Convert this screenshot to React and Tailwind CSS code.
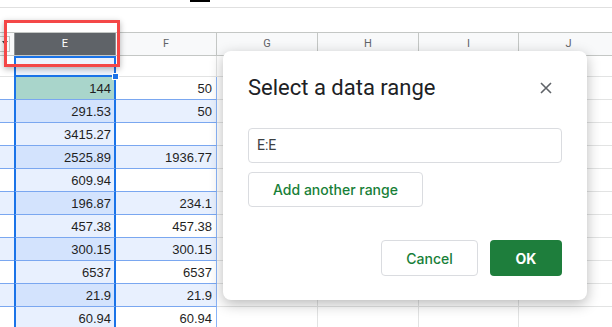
const rows = [
  ['144', '50'],
  ['291.53', '50'],
  ['3415.27', ''],
  ['2525.89', '1936.77'],
  ['609.94', ''],
  ['196.87', '234.1'],
  ['457.38', '457.38'],
  ['300.15', '300.15'],
  ['6537', '6537'],
  ['21.9', '21.9'],
  ['60.94', '60.94'],
]

const rest = ['G', 'H', 'I', 'J']
const restW = ['w-[101px]', 'w-[101px]', 'w-[100px]', 'w-[100px]']

function DataRow({ e, f, i }) {
  const banded = i % 2 === 1
  const eBg = i === 0 ? 'bg-[#a9d5cb]' : banded ? 'bg-[#d3e3fd]' : 'bg-[#e8f0fe]'
  const sideBg = banded ? 'bg-[#e8f0fe]' : 'bg-white'
  return (
    <div className="flex h-[23px] shrink-0">
      <div className={`w-[14px] shrink-0 border-b border-[#7aa7f0] ${sideBg}`} />
      <div className={`w-[102px] shrink-0 border-x-2 border-b border-x-[#1a73e8] border-b-[#7aa7f0] ${eBg} pr-[3px] pt-px text-right leading-[21px]`}>{e}</div>
      <div className={`w-[101px] shrink-0 border-r border-b border-r-[#8ab4f8] border-b-[#7aa7f0] ${sideBg} pr-[4px] pt-px text-right leading-[21px]`}>{f}</div>
      {rest.map((c, k) => (
        <div key={c} className={`${restW[k]} shrink-0 border-r border-b border-[#e2e3e3] bg-white`} />
      ))}
    </div>
  )
}

export default function App() {
  return (
    <div className="relative w-[612px] h-[327px] overflow-hidden bg-white text-[13px] text-[#1f1f1f] font-['Liberation_Sans',Arial,sans-serif]">
      <div className="h-[8px] border-b border-[#e0e0e0] relative">
        <div className="absolute left-[190px] top-0 w-[20px] h-[2px] bg-black" />
      </div>
      <div className="h-[24px]" />

      {/* column headers */}
      <div className="flex h-[24px] border-y border-[#c4c7c5] bg-[#f8f9fa] text-[11px] text-[#5f6368] font-['Roboto',sans-serif]">
        <div className="w-[14px] shrink-0 relative">
          <div className="absolute left-0 top-[3px] w-[10px] h-[16px] border border-[#c4c7c5] border-l-0" />
          <div className="absolute left-[2px] top-[8px] w-0 h-0 border-x-[3px] border-x-transparent border-t-[4px] border-t-[#444]" />
        </div>
        <div className="w-[102px] shrink-0 bg-[#5f6368] text-white flex items-center justify-center border-x border-[#8c9093]">E</div>
        <div className="w-[101px] shrink-0 border-r border-[#c4c7c5] flex items-center justify-center">F</div>
        {rest.map((c, k) => (
          <div key={c} className={`${restW[k]} shrink-0 border-r border-[#c4c7c5] flex items-center justify-center`}>{c}</div>
        ))}
      </div>

      {/* active row */}
      <div className="flex h-[21px]">
        <div className="w-[14px] shrink-0 border-b border-[#e2e3e3]" />
        <div className="w-[102px] shrink-0 border-2 border-[#1a73e8] bg-[#eef3fd]" />
        <div className="w-[101px] shrink-0 border-r border-b border-[#e2e3e3]" />
        {rest.map((c, k) => (
          <div key={c} className={`${restW[k]} shrink-0 border-r border-b border-[#e2e3e3]`} />
        ))}
      </div>

      {rows.map((r, i) => (
        <DataRow key={i} e={r[0]} f={r[1]} i={i} />
      ))}

      {/* fill handle */}
      <div className="absolute left-[112px] top-[73px] w-[7px] h-[7px] bg-[#1a73e8] border border-white" />

      {/* red callout box */}
      <div className="absolute left-[4px] top-[20px] w-[116px] h-[47px] border-[3px] border-[#f44747] shadow-[0_2px_6px_rgba(0,0,0,0.3)]" />

      {/* dialog */}
      <div className="absolute left-[223px] top-[51px] w-[364px] h-[249px] bg-white rounded-[8px] shadow-[0_4px_14px_rgba(0,0,0,0.28)] px-[25px] pt-[23px] font-['Roboto',sans-serif]">
        <div className="flex items-center justify-between h-[28px]">
          <span className="text-[22px] leading-[28px] text-[#202124]">Select a data range</span>
          <svg width="12" height="12" viewBox="0 0 12 12" className="mr-[10px]">
            <path d="M1 1L11 11M11 1L1 11" stroke="#5f6368" strokeWidth="1.6" />
          </svg>
        </div>
        <div className="mt-[26px] h-[35px] border border-[#dadce0] rounded-[4px] flex items-center pl-[8px] text-[14px] text-[#3c4043]">E:E</div>
        <div className="mt-[9px] w-[175px] h-[35px] border border-[#dadce0] rounded-[4px] flex items-center justify-center text-[14px] font-medium text-[#188038] font-['Inter',sans-serif]">Add another range</div>
        <div className="mt-[33px] flex justify-end gap-[12px] font-['Inter',sans-serif]">
          <div className="w-[97px] h-[36px] border border-[#dadce0] rounded-[4px] flex items-center justify-center text-[14px] font-medium text-[#188038]">Cancel</div>
          <div className="w-[72px] h-[36px] rounded-[4px] bg-[#1e7e3c] flex items-center justify-center text-[14px] font-bold text-white">OK</div>
        </div>
      </div>
    </div>
  )
}
